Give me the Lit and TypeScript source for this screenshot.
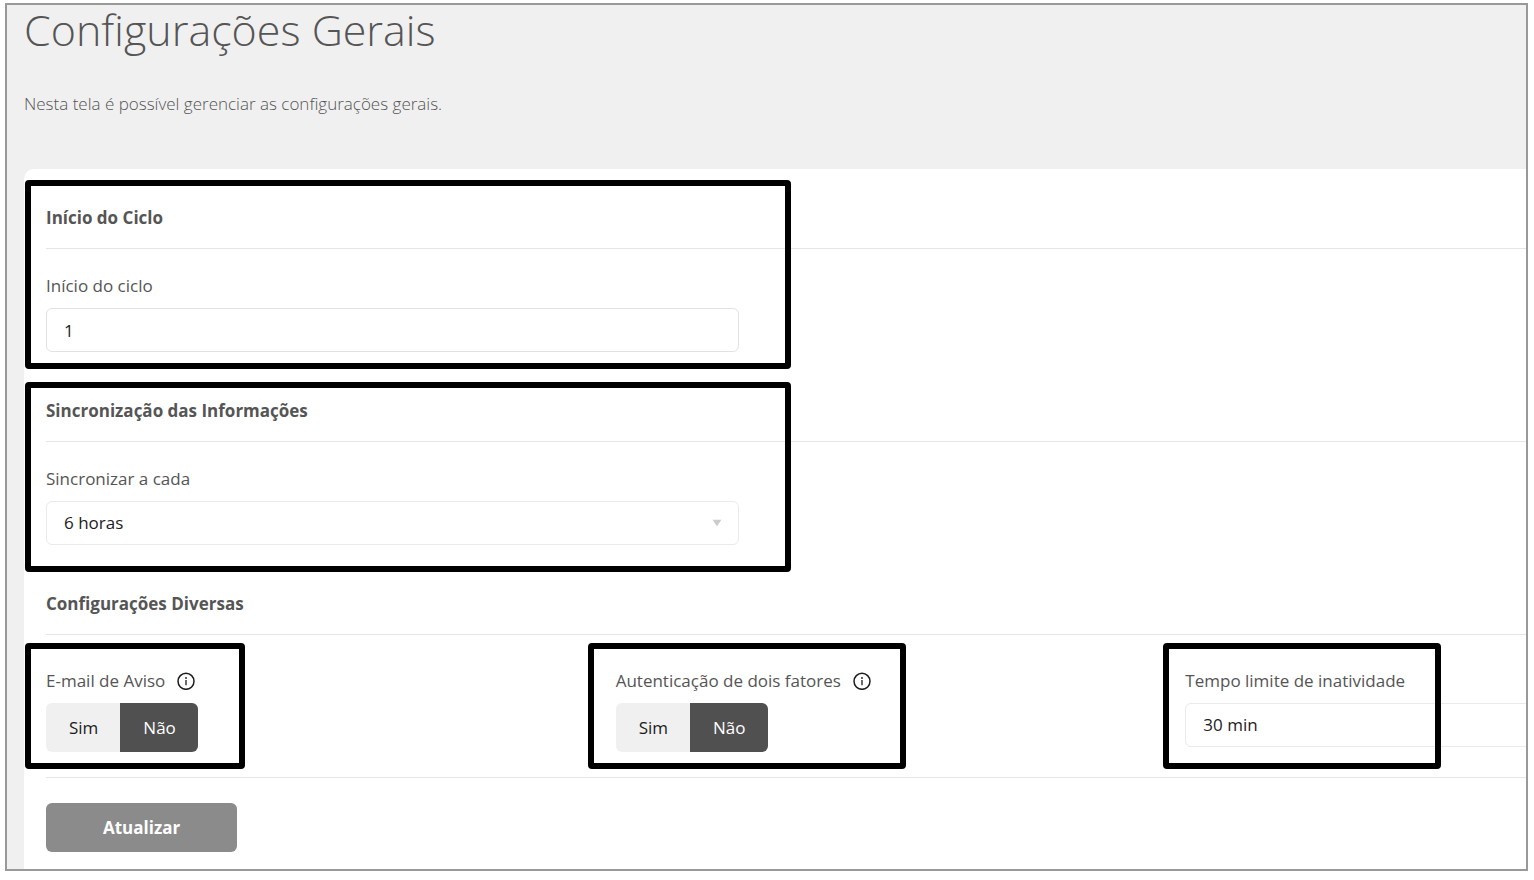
import { LitElement, html, css, svg } from "lit";
import { customElement, property, state } from "lit/decorators.js";

@customElement("info-button")
class InfoButton extends LitElement {
  @property() label = "";

  static styles = css`
    :host {
      display: inline-flex;
    }
    .info {
      display: inline-flex;
      padding: 0;
      border: 0;
      background: none;
      color: #1c1c1c;
      cursor: pointer;
    }
  `;

  render() {
    return html`<button class="info" type="button" aria-label=${this.label}>
      <svg width="18" height="18" viewBox="0 0 18 18" aria-hidden="true">
        ${svg`<circle cx="9" cy="9.3" r="8" fill="none" stroke="currentColor" stroke-width="1.5" />
        <circle cx="9" cy="6" r="0.9" fill="currentColor" />
        <path d="M9 8V13.2" stroke="currentColor" stroke-width="1.3" />`}
      </svg>
    </button>`;
  }
}

@customElement("yes-no-toggle")
class YesNoToggle extends LitElement {
  @property() label = "";
  @state() private enabled = false;

  static styles = css`
    :host {
      display: flex;
    }
    .group {
      display: inline-flex;
      height: 49px;
      border-radius: 6px;
      overflow: hidden;
    }
    .option {
      padding: 0 22px 0 23px;
      border: 0;
      background: #f0f0f0;
      color: #1c1c1c;
      font: 400 17px/24px "Open Sans", sans-serif;
      cursor: pointer;
    }
    .option.active {
      background: #505050;
      color: #ffffff;
    }
  `;

  render() {
    const option = (text: string, value: boolean) => html`<button
      type="button"
      class="option ${this.enabled === value ? "active" : ""}"
      aria-pressed=${this.enabled === value}
      @click=${() => (this.enabled = value)}
    >${text}</button>`;
    return html`<div class="group" role="group" aria-label=${this.label}>
      ${option("Sim", true)}${option("Não", false)}
    </div>`;
  }
}

@customElement("app-root")
class AppRoot extends LitElement {
  static styles = css`
    :host {
      display: block;
      padding: 3px 6px 9px 5px;
      background: #ffffff;
      color: #555555;
      font: 400 17px/24px "Open Sans", sans-serif;
    }
    .window {
      border: 2px solid #999999;
      padding-left: 17px;
      background: #f0f0f0;
    }
    h1,
    h2,
    p {
      margin: 0;
    }
    h1 {
      font-size: 43px;
      line-height: 50px;
      font-weight: 300;
    }
    .intro {
      margin: 37px 0 53px;
      font-weight: 300;
    }
    .viewport {
      overflow-x: clip;
    }
    /* The panel is wider than the window and runs out past its right edge. */
    .panel {
      box-sizing: border-box;
      width: calc(100% + 232px);
      padding: 37px 22px 17px;
      border-radius: 10px 0 0 0;
      background: #ffffff;
    }
    .section {
      position: relative;
      margin-bottom: 47px;
    }
    .section.last {
      margin-bottom: 25px;
    }
    h2 {
      padding-bottom: 18px;
      border-bottom: 1px solid #e6e6e6;
      font-size: 17px;
      line-height: 24px;
      font-weight: 700;
    }
    .row {
      display: grid;
      grid-template-columns: repeat(12, 1fr);
      column-gap: 19px;
      padding-top: 25px;
    }
    .last .row {
      padding: 34px 0 25px;
      border-bottom: 1px solid #e6e6e6;
    }
    .cell {
      position: relative;
      display: flex;
      flex-direction: column;
      gap: 10px;
      grid-column: span 4;
    }
    .cell.wide {
      grid-column: span 5;
    }
    .caption {
      display: flex;
      align-items: center;
      gap: 12px;
    }
    .control {
      box-sizing: border-box;
      width: 100%;
      height: 44px;
      margin: 0;
      padding: 0 17px;
      border: 1px solid #e2e2e2;
      border-radius: 6px;
      background: #ffffff;
      color: #1c1c1c;
      font: inherit;
      appearance: none;
    }
    .picker {
      display: grid;
      align-items: center;
    }
    .picker > * {
      grid-area: 1 / 1;
    }
    .picker .control {
      border-color: #eaeaea;
    }
    .arrow {
      justify-self: end;
      margin-right: 17px;
      pointer-events: none;
    }
    .submit {
      display: block;
      height: 49px;
      padding: 0 57px;
      border: 0;
      border-radius: 6px;
      background: #8b8b8b;
      color: #ffffff;
      font: 700 17px/24px "Open Sans", sans-serif;
      cursor: pointer;
    }
    /* Black callout frames drawn over the form. */
    .mark {
      position: absolute;
      box-sizing: border-box;
      border: 6px solid #000000;
      border-radius: 4px;
      pointer-events: none;
      left: -21px;
      top: -26px;
      bottom: -17px;
      z-index: 1;
    }
    .mark.cycle {
      width: 766px;
    }
    .mark.sync {
      width: 766px;
      top: -17px;
      bottom: -27px;
    }
    .mark.mail {
      width: 220px;
    }
    .mark.factor {
      left: -28px;
      width: 318px;
    }
    .mark.idle {
      left: -22px;
      width: 278px;
    }
  `;

  private picker(id: string, options: string[]) {
    return html`<div class="picker">
      <select class="control" id=${id}>
        ${options.map((o) => html`<option>${o}</option>`)}
      </select>
      <svg class="arrow" width="10" height="8" viewBox="0 0 10 8" aria-hidden="true">
        <path d="M0.5 0.7H9.5L5 7.2Z" fill="#cccccc" />
      </svg>
    </div>`;
  }

  render() {
    return html`<main class="window">
      <h1>Configurações Gerais</h1>
      <p class="intro">Nesta tela é possível gerenciar as configurações gerais.</p>
      <div class="viewport">
        <form class="panel" @submit=${(e: Event) => e.preventDefault()}>
          <section class="section">
            <h2>Início do Ciclo</h2>
            <div class="row">
              <div class="cell wide">
                <label for="cycle">Início do ciclo</label>
                <input class="control" id="cycle" type="text" value="1" />
              </div>
            </div>
            <div class="mark cycle"></div>
          </section>
          <section class="section">
            <h2>Sincronização das Informações</h2>
            <div class="row">
              <div class="cell wide">
                <label for="sync">Sincronizar a cada</label>
                ${this.picker("sync", ["6 horas"])}
              </div>
            </div>
            <div class="mark sync"></div>
          </section>
          <section class="section last">
            <h2>Configurações Diversas</h2>
            <div class="row">
              <div class="cell">
                <div class="caption">
                  <span>E-mail de Aviso</span>
                  <info-button label="E-mail de Aviso"></info-button>
                </div>
                <yes-no-toggle label="E-mail de Aviso"></yes-no-toggle>
                <div class="mark mail"></div>
              </div>
              <div class="cell">
                <div class="caption">
                  <span>Autenticação de dois fatores</span>
                  <info-button label="Autenticação de dois fatores"></info-button>
                </div>
                <yes-no-toggle label="Autenticação de dois fatores"></yes-no-toggle>
                <div class="mark factor"></div>
              </div>
              <div class="cell">
                <label for="idle">Tempo limite de inatividade</label>
                ${this.picker("idle", ["30 min"])}
                <div class="mark idle"></div>
              </div>
            </div>
          </section>
          <button class="submit" type="submit">Atualizar</button>
        </form>
      </div>
    </main>`;
  }
}
